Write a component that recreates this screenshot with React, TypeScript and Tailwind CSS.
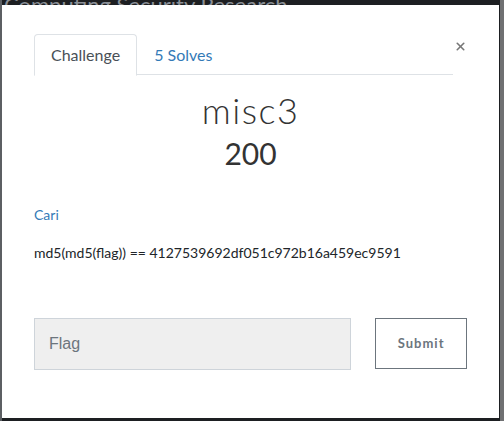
import { X } from 'lucide-react'

export default function App() {
  return (
    <div className="w-[504px] h-[421px] overflow-hidden bg-[#1d1f22] relative" style={{ fontFamily: 'Lato, sans-serif' }}>
      {/* page behind the modal, barely visible at the top edge */}
      <div className="absolute top-[-12px] left-[4px] text-[22px] text-[#8a8f96] whitespace-nowrap">
        Computing Security Research
      </div>
      <div className="absolute left-0 top-0 w-[2px] h-full bg-[#5c5f63]" />
      <div className="absolute right-0 top-0 w-[4px] h-full bg-[#6f7072]" />

      <div className="relative ml-[2px] mt-[5px] w-[497px] h-[413px] bg-white px-[32px] pt-[29px]">
        {/* Tabs */}
        <div className="flex items-start">
          <div className="flex flex-1 border-b border-[#dee2e6] h-[41px]">
            <div className="h-[42px] px-[16px] flex items-center border border-[#dee2e6] border-b-white rounded-t-[4px] text-[16px] text-[#495057] bg-white">
              Challenge
            </div>
            <div className="h-[41px] px-[17px] flex items-center text-[16px] text-[#337ab7]">
              5 Solves
            </div>
          </div>
          <button className="w-[13px] ml-[1px] mt-[5px] flex justify-center text-[#777]">
            <X size={15} strokeWidth={3} />
          </button>
        </div>

        {/* Title */}
        <div className="text-center mt-[14px]">
          <div className="text-[36px] leading-[42px] font-light text-[#333] tracking-[1.5px]">misc3</div>
          <div className="text-[30px] leading-[36px] text-[#333] mt-[4px]">200</div>
        </div>

        {/* Description */}
        <div className="mt-[34px] text-[14px] text-[#337ab7] leading-[20px]">Cari</div>
        <div className="mt-[18px] text-[14px] text-[#212529] leading-[20px]">
          md5(md5(flag)) == 4127539692df051c972b16a459ec9591
        </div>

        {/* Form */}
        <div className="flex items-start mt-[55px] gap-[24px]">
          <div
            className="w-[318px] h-[52px] bg-[#efefef] border border-[#ced4da] flex items-center px-[14px] text-[16px] text-[#6c757d]"
            style={{ fontFamily: '"Liberation Sans", Arial, sans-serif' }}
          >
            Flag
          </div>
          <button className="w-[92px] h-[51px] border border-[#6c757d] text-[#6c757d] text-[13px] font-bold tracking-[1px] flex items-center justify-center">
            Submit
          </button>
        </div>
      </div>
    </div>
  )
}
